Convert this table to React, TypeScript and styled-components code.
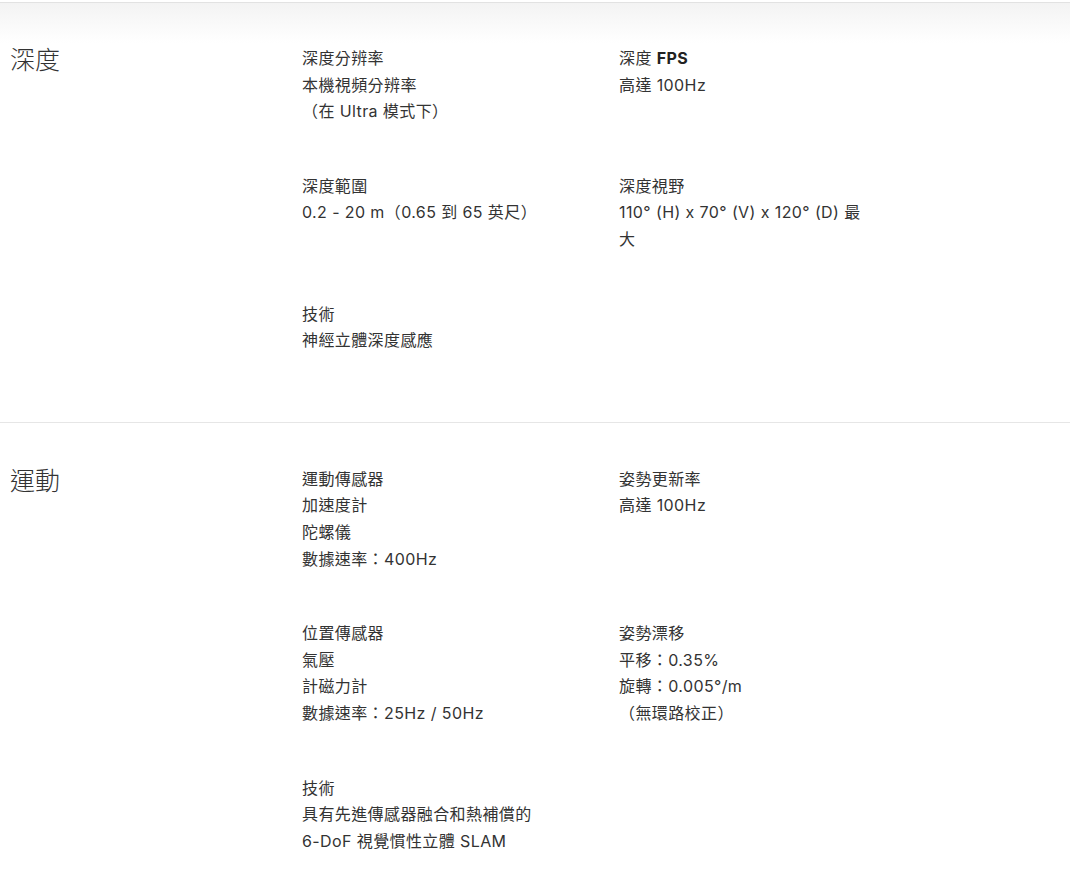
import styled, { createGlobalStyle } from 'styled-components';

type Spec = {
	label: React.ReactNode;
	lines: string[];
};

type Section = {
	title: string;
	specs: Spec[];
};

const sections: Section[] = [
	{
		title: '深度',
		specs: [
			{ label: '深度分辨率', lines: ['本機視頻分辨率', '（在 Ultra 模式下）'] },
			{
				label: (
					<>
						深度 <b>FPS</b>
					</>
				),
				lines: ['高達 100Hz'],
			},
			{ label: '深度範圍', lines: ['0.2 - 20 m（0.65 到 65 英尺）'] },
			{ label: '深度視野', lines: ['110° (H) x 70° (V) x 120° (D) 最大'] },
			{ label: '技術', lines: ['神經立體深度感應'] },
		],
	},
	{
		title: '運動',
		specs: [
			{ label: '運動傳感器', lines: ['加速度計', '陀螺儀', '數據速率：400Hz'] },
			{ label: '姿勢更新率', lines: ['高達 100Hz'] },
			{ label: '位置傳感器', lines: ['氣壓', '計磁力計', '數據速率：25Hz / 50Hz'] },
			{ label: '姿勢漂移', lines: ['平移：0.35%', '旋轉：0.005°/m', '（無環路校正）'] },
			{ label: '技術', lines: ['具有先進傳感器融合和熱補償的', '6-DoF 視覺慣性立體 SLAM'] },
		],
	},
];

export default function App() {
	return (
		<>
			<GlobalStyle />
			<Page>
				<Shade />
				{sections.map((section, i) => (
					<SpecSection key={section.title} first={i === 0}>
						<Title>{section.title}</Title>
						<SpecGrid>
							{section.specs.map((spec, j) => (
								<SpecItem key={j}>
									<Label>{spec.label}</Label>
									{spec.lines.map(line => (
										<Value key={line}>{line}</Value>
									))}
								</SpecItem>
							))}
						</SpecGrid>
					</SpecSection>
				))}
			</Page>
		</>
	);
}

const GlobalStyle = createGlobalStyle`
	body {
		margin: 0;
		background: #ffffff;
		color: #333333;
		font-family: Inter, 'Noto Sans CJK TC', sans-serif;
	}
`;

const Page = styled.div`
	display: flex;
	flex-direction: column;
	width: 1070px;
	min-height: 877px;
`;

const Shade = styled.div`
	height: 40px;
	margin-top: 2px;
	border-top: 1px solid #e2e2e2;
	background: linear-gradient(#f3f3f3, #ffffff);
`;

const SpecSection = styled.section<{ first: boolean }>`
	display: grid;
	grid-template-columns: 302px 1fr;
	padding: ${({ first }) => (first ? '2px 0 68px' : '43px 0 10px')};
	border-top: ${({ first }) => (first ? 'none' : '1px solid #e6e6e6')};
`;

const Title = styled.h2`
	margin: 0;
	padding-left: 10px;
	font-size: 25px;
	font-weight: 300;
	line-height: 31px;
	color: #333333;
`;

const SpecGrid = styled.div`
	display: grid;
	grid-template-columns: 246px 246px;
	column-gap: 71px;
	row-gap: 48px;
	align-items: start;
`;

const SpecItem = styled.div`
	display: flex;
	flex-direction: column;
	font-size: 16px;
	line-height: 26.6px;
	letter-spacing: 0.4px;
`;

const Label = styled.div`
	color: #333333;
	b {
		font-weight: 700;
		color: #222222;
	}
`;

const Value = styled.div`
	color: #333333;
`;
